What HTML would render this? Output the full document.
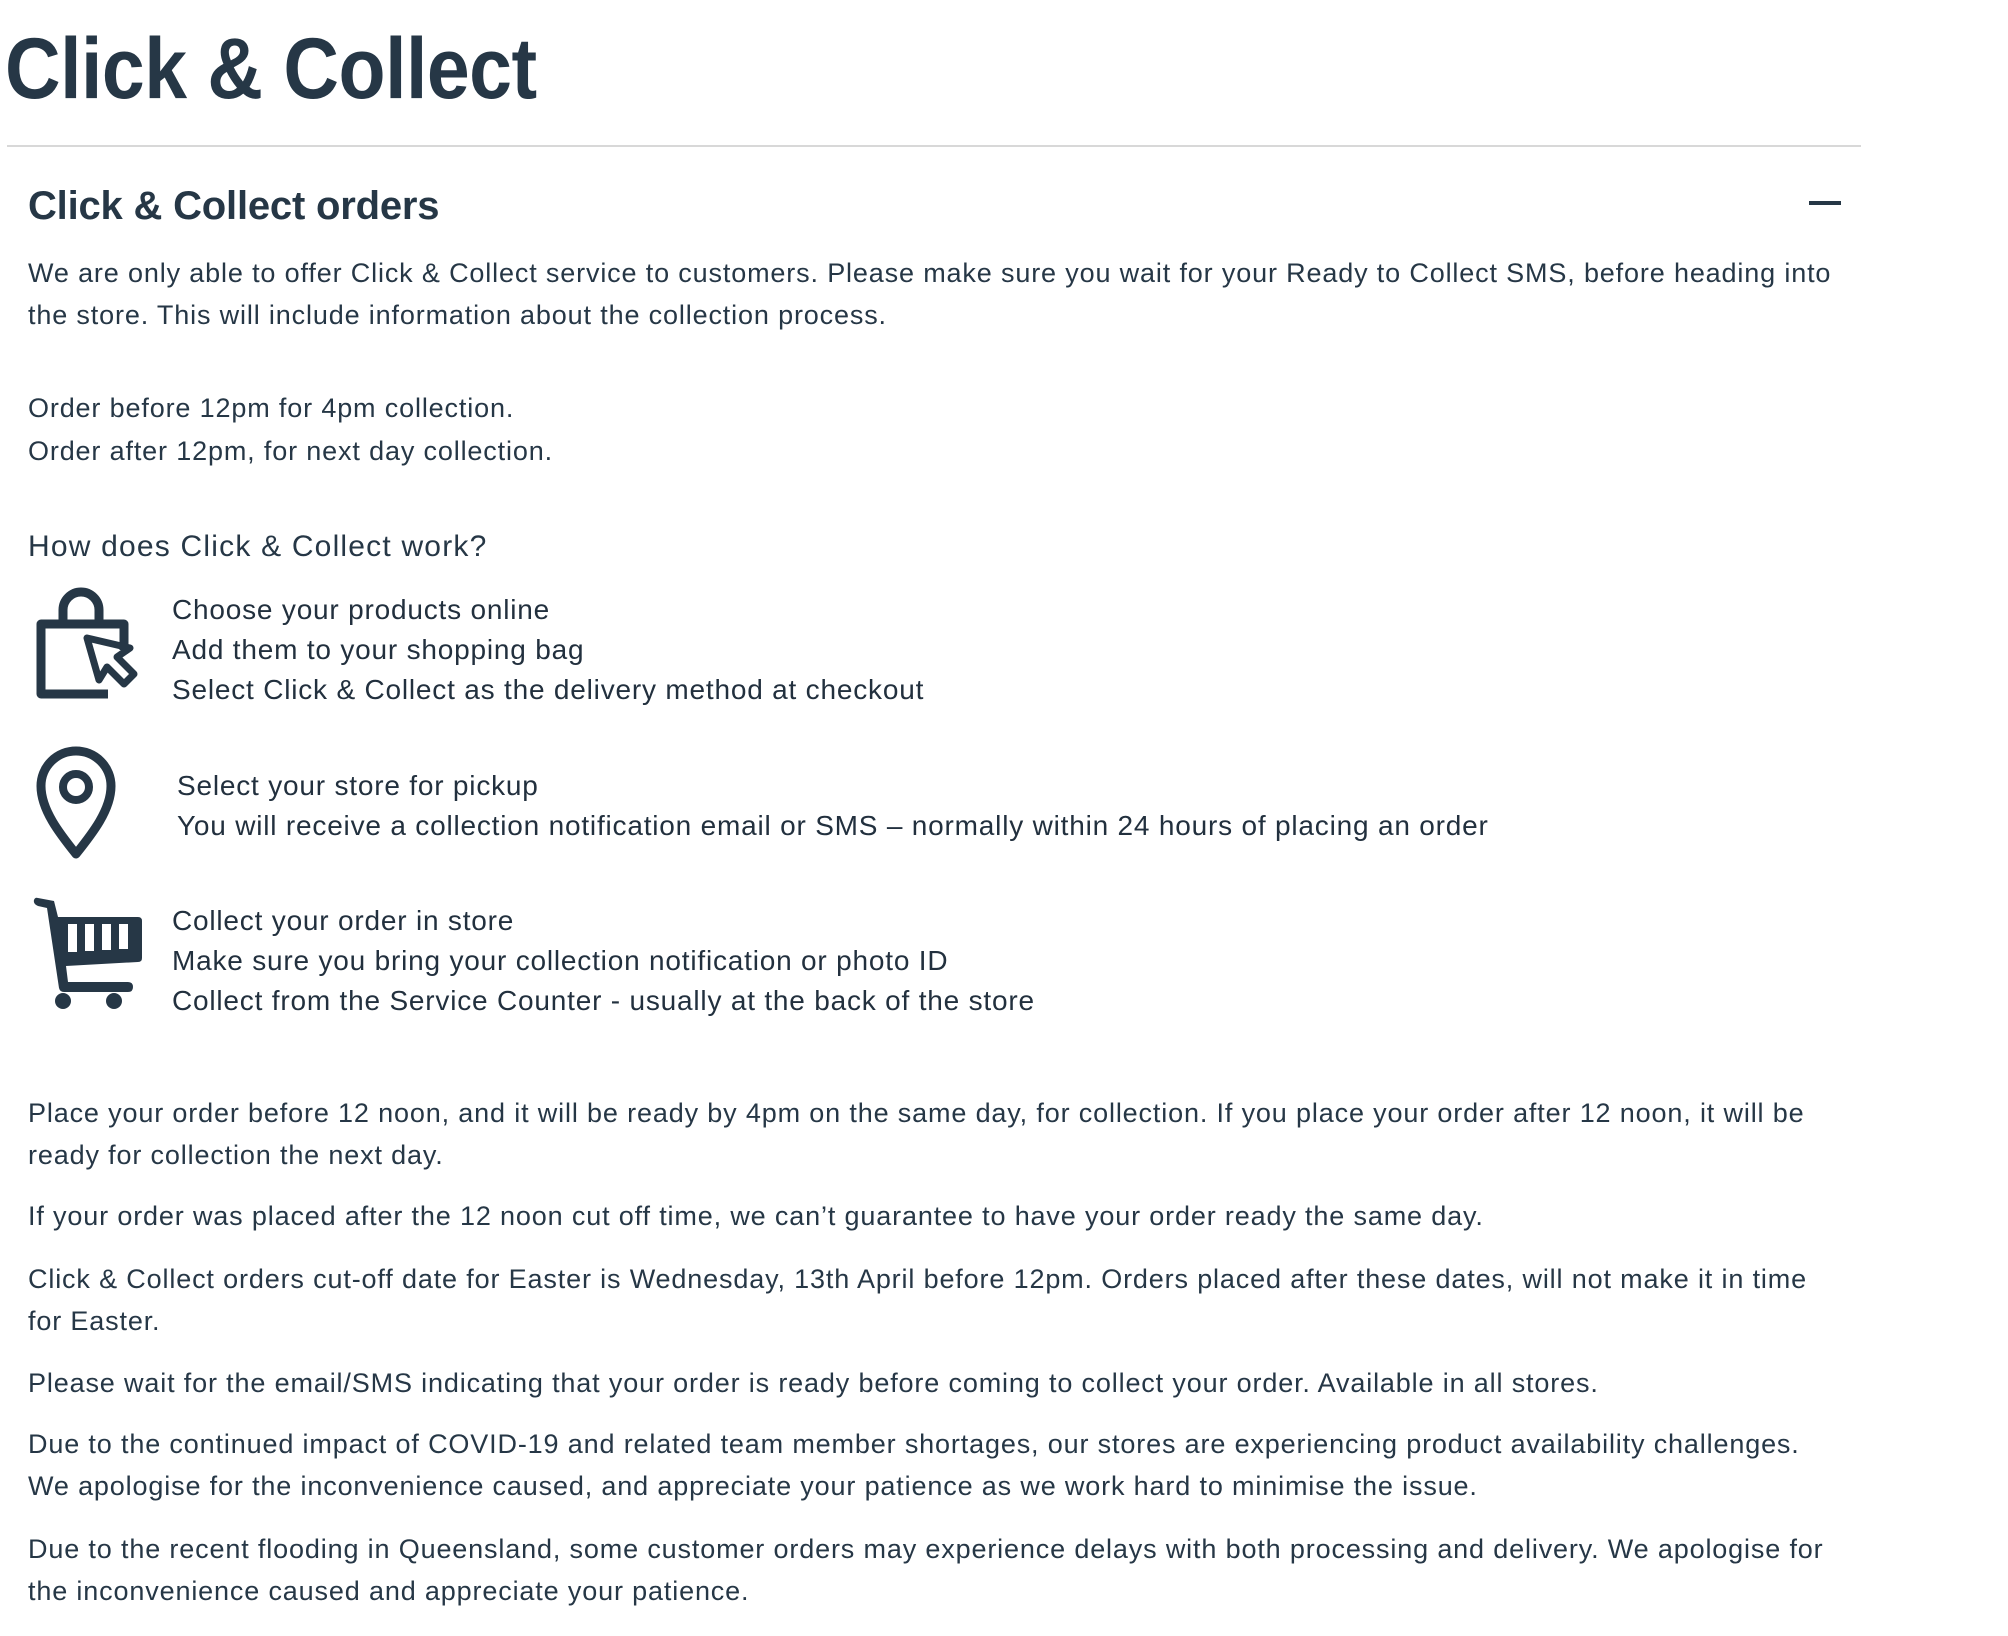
<!DOCTYPE html>
<html><head><meta charset="utf-8"><style>
html,body{margin:0;padding:0;background:#fff;width:2008px;height:1636px;overflow:hidden}
body{position:relative;font-family:"Liberation Sans",sans-serif;color:#263746}
.a{position:absolute;white-space:nowrap}
.b{font-size:27px;letter-spacing:0.85px;line-height:42px;height:42px}
.s{font-size:28px;letter-spacing:0.8px;line-height:40px;height:40px;color:#22303e}
</style></head><body>
<div class="a" style="left:5px;top:26px;font-size:77px;font-weight:bold;line-height:90px;transform:scaleY(1.12);transform-origin:0 70%;letter-spacing:-0.5px">Click &amp; Collect</div>
<div class="a" style="left:7px;top:145px;width:1854px;height:2px;background:#d8d8d8"></div>
<div class="a" style="left:28px;top:184px;font-size:40px;font-weight:bold;line-height:44px;letter-spacing:-0.2px">Click &amp; Collect orders</div>
<div class="a" style="left:1809px;top:201px;width:32px;height:4px;background:#263746"></div>

<div class="a b" style="left:28px;top:252px">We are only able to offer Click &amp; Collect service to customers. Please make sure you wait for your Ready to Collect SMS, before heading into</div>
<div class="a b" style="left:28px;top:294px">the store. This will include information about the collection process.</div>
<div class="a b" style="left:28px;top:387px">Order before 12pm for 4pm collection.</div>
<div class="a b" style="left:28px;top:430px">Order after 12pm, for next day collection.</div>
<div class="a" style="left:28px;top:527px;font-size:30px;letter-spacing:1.2px;line-height:40px">How does Click &amp; Collect work?</div>

<svg class="a" style="left:0;top:0" width="200" height="1040" viewBox="0 0 200 1040">
<g fill="none" stroke="#263746" stroke-width="9" stroke-linejoin="round">
<path d="M63 624 V610 A18 18 0 0 1 99 610 V624"/>
<path d="M124 650 V624 H41 V694 H108"/>
<path d="M87 638 L99 680 L107 667 L124 684 L134 674 L117 657 L130 648 Z" stroke-width="7"/>
<path d="M76 854 C60 834 41 810 41 786 A35 35 0 0 1 111 786 C111 810 92 834 76 854 Z"/>
<circle cx="76" cy="787" r="13" stroke-width="8"/>
</g>
<g fill="#263746">
<path d="M38 898 L54 901 L58 917 L138 917 Q142 917 142 921 L142 958 Q142 962 138 962 L66 966 L68 982 L128 982 Q133 982 133 987 Q133 992 128 992 L64 992 Q60 992 59 988 L47 908 L38 906 Q33 904 34 900 Q35 897 38 898 Z"/>
</g>
<g fill="#fff">
<rect x="68" y="924" width="9" height="28"/><rect x="85" y="924" width="9" height="27"/><rect x="102" y="924" width="9" height="26"/><rect x="119" y="924" width="9" height="25"/>
</g>
<circle cx="63" cy="1001" r="8" fill="#263746"/><circle cx="114" cy="1001" r="8" fill="#263746"/>
</svg>

<div class="a s" style="left:172px;top:590px">Choose your products online</div>
<div class="a s" style="left:172px;top:630px">Add them to your shopping bag</div>
<div class="a s" style="left:172px;top:670px">Select Click &amp; Collect as the delivery method at checkout</div>
<div class="a s" style="left:177px;top:766px">Select your store for pickup</div>
<div class="a s" style="left:177px;top:806px">You will receive a collection notification email or SMS – normally within 24 hours of placing an order</div>
<div class="a s" style="left:172px;top:901px">Collect your order in store</div>
<div class="a s" style="left:172px;top:941px">Make sure you bring your collection notification or photo ID</div>
<div class="a s" style="left:172px;top:981px">Collect from the Service Counter - usually at the back of the store</div>

<div class="a b" style="left:28px;top:1092px">Place your order before 12 noon, and it will be ready by 4pm on the same day, for collection. If you place your order after 12 noon, it will be</div>
<div class="a b" style="left:28px;top:1134px">ready for collection the next day.</div>
<div class="a b" style="left:28px;top:1195px">If your order was placed after the 12 noon cut off time, we can’t guarantee to have your order ready the same day.</div>
<div class="a b" style="left:28px;top:1258px">Click &amp; Collect orders cut-off date for Easter is Wednesday, 13th April before 12pm. Orders placed after these dates, will not make it in time</div>
<div class="a b" style="left:28px;top:1300px">for Easter.</div>
<div class="a b" style="left:28px;top:1362px">Please wait for the email/SMS indicating that your order is ready before coming to collect your order. Available in all stores.</div>
<div class="a b" style="left:28px;top:1423px">Due to the continued impact of COVID-19 and related team member shortages, our stores are experiencing product availability challenges.</div>
<div class="a b" style="left:28px;top:1465px">We apologise for the inconvenience caused, and appreciate your patience as we work hard to minimise the issue.</div>
<div class="a b" style="left:28px;top:1528px">Due to the recent flooding in Queensland, some customer orders may experience delays with both processing and delivery. We apologise for</div>
<div class="a b" style="left:28px;top:1570px">the inconvenience caused and appreciate your patience.</div>
</body></html>
